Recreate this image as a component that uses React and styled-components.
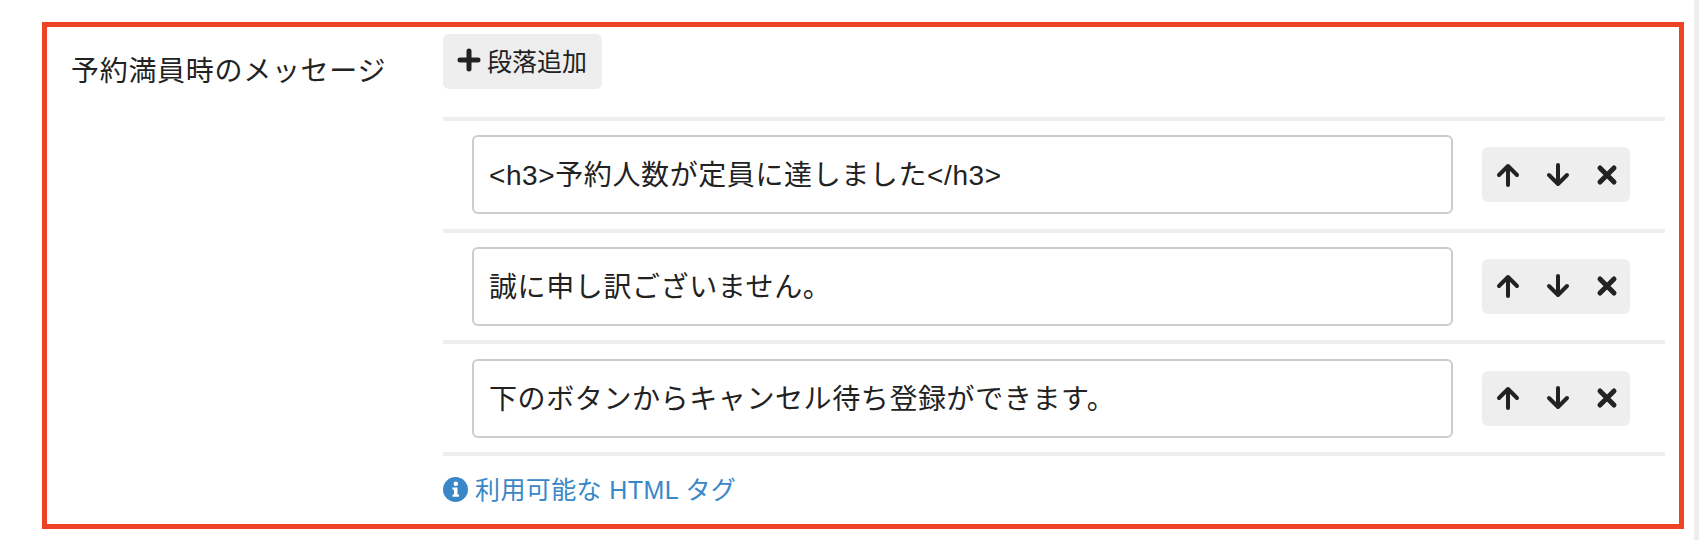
import React from "react";
import styled, { createGlobalStyle } from "styled-components";

const GlobalStyle = createGlobalStyle`
  html, body {
    margin: 0;
    padding: 0;
    background: #fff;
  }
  body {
    font-family: "Liberation Sans", "Noto Sans CJK JP", sans-serif;
    color: #222;
  }
`;

const Page = styled.div`
  width: 1699px;
  height: 540px;
  box-sizing: border-box;
  padding: 22px 10px 0 42px;
  overflow: hidden;
  border-right: 5px solid #eee;
`;

const FormRow = styled.section`
  display: flex;
  box-sizing: border-box;
  height: 507px;
  border: 5px solid #ee4325;
  padding: 7px 14px 0 24px;
`;

const Label = styled.label`
  width: 372px;
  flex: none;
  padding-top: 18px;
  font-size: 28px;
  line-height: 40px;
  letter-spacing: 0.7px;
  white-space: nowrap;
`;

const Fields = styled.div`
  flex: 1;
  min-width: 0;
`;

const AddButton = styled.button`
  display: flex;
  align-items: center;
  gap: 6px;
  width: 159px;
  height: 55px;
  padding: 0 0 3px 14px;
  border: 0;
  border-radius: 6px;
  background: #eee;
  color: #222;
  font: 25px "Liberation Sans", "Noto Sans CJK JP", sans-serif;
`;

const List = styled.div`
  margin-top: 28px;
  border-top: 4px solid #eee;
`;

const Item = styled.div`
  display: flex;
  align-items: center;
  height: 107.67px;
  padding: 0 35px 0 29px;
  border-bottom: 4px solid #eee;
`;

const TextBox = styled.div`
  flex: 1;
  box-sizing: border-box;
  height: 79px;
  padding: 3px 15px 0;
  border: 2px solid #ccc;
  border-radius: 6px;
  font-size: 28px;
  line-height: 72px;
  letter-spacing: 0.6px;
`;

const Tools = styled.div`
  display: flex;
  align-items: center;
  justify-content: space-between;
  box-sizing: border-box;
  width: 148px;
  height: 55px;
  margin-left: 29px;
  padding: 0 11px 0 14px;
  border-radius: 6px;
  background: #eee;
`;

const ToolIcon = styled.svg`
  display: block;
  width: 24px;
  height: 24px;
  fill: none;
  stroke: #222;
  stroke-width: 4;
  stroke-linecap: round;
  stroke-linejoin: round;
`;

const HelpLink = styled.a`
  display: flex;
  align-items: center;
  gap: 7px;
  margin-top: 14px;
  color: #3a87c8;
  font-size: 25px;
  line-height: 40px;
  letter-spacing: 0.4px;
`;

const UpIcon = () => (
  <ToolIcon viewBox="0 0 24 24"><path d="M12 22V3M3 12l9-9 9 9" /></ToolIcon>
);
const DownIcon = () => (
  <ToolIcon viewBox="0 0 24 24"><path d="M12 2v19M3 12l9 9 9-9" /></ToolIcon>
);
const CloseIcon = () => (
  <ToolIcon viewBox="0 0 24 24"><path d="M5 5l14 14M19 5L5 19" strokeWidth="5" /></ToolIcon>
);
const PlusIcon = () => (
  <ToolIcon viewBox="0 0 24 24"><path d="M12 3v18M3 12h18" strokeWidth="5" /></ToolIcon>
);
const InfoIcon = () => (
  <svg width="25" height="25" viewBox="0 0 25 25">
    <circle cx="12.5" cy="12.5" r="12.5" fill="#3a87c8" />
    <circle cx="12.8" cy="6.8" r="2.3" fill="#fff" />
    <path d="M9.5 10.5h5v7h1.5v2.2H9.5v-2.2h1.5v-4.8H9.5z" fill="#fff" />
  </svg>
);

const paragraphs = [
  "<h3>予約人数が定員に達しました</h3>",
  "誠に申し訳ございません。",
  "下のボタンからキャンセル待ち登録ができます。",
];

export default function App() {
  return (
    <Page>
      <GlobalStyle />
      <FormRow>
        <Label>予約満員時のメッセージ</Label>
        <Fields>
          <AddButton type="button">
            <PlusIcon />
            段落追加
          </AddButton>
          <List>
            {paragraphs.map((text) => (
              <Item key={text}>
                <TextBox>{text}</TextBox>
                <Tools>
                  <UpIcon />
                  <DownIcon />
                  <CloseIcon />
                </Tools>
              </Item>
            ))}
          </List>
          <HelpLink>
            <InfoIcon />
            利用可能な HTML タグ
          </HelpLink>
        </Fields>
      </FormRow>
    </Page>
  );
}
